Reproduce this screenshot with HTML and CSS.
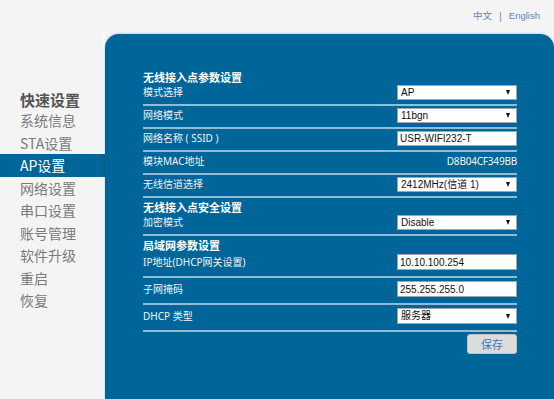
FILE: index.html
```html
<!DOCTYPE html>
<html lang="zh-CN">
<head>
<meta charset="utf-8">
<title>AP设置</title>
<link rel="stylesheet" href="styles.css">
</head>
<body>
<div class="topbar">
  <a class="lang" href="#">中文</a><span class="sep">|</span><a class="lang" href="#">English</a>
</div>
<div class="main">
  <nav class="sidebar">
    <div class="side-title">快速设置</div>
    <div class="side-item">系统信息</div>
    <div class="side-item">STA设置</div>
    <div class="side-item active">AP设置</div>
    <div class="side-item">网络设置</div>
    <div class="side-item">串口设置</div>
    <div class="side-item">账号管理</div>
    <div class="side-item">软件升级</div>
    <div class="side-item">重启</div>
    <div class="side-item">恢复</div>
  </nav>
  <section class="panel">
    <div class="sec-title first">无线接入点参数设置</div>
    <div class="row">
      <span class="label">模式选择</span>
      <div class="select">AP</div>
    </div>
    <div class="row">
      <span class="label">网络模式</span>
      <div class="select">11bgn</div>
    </div>
    <div class="row">
      <span class="label">网络名称 ( SSID )</span>
      <input class="input" type="text" value="USR-WIFI232-T">
    </div>
    <div class="row">
      <span class="label">模块MAC地址</span>
      <span class="value">D8B04CF349BB</span>
    </div>
    <div class="row">
      <span class="label">无线信道选择</span>
      <div class="select">2412MHz(信道 1)</div>
    </div>

    <div class="sec-title">无线接入点安全设置</div>
    <div class="row">
      <span class="label">加密模式</span>
      <div class="select">Disable</div>
    </div>

    <div class="sec-title">局域网参数设置</div>
    <div class="row tall">
      <span class="label">IP地址(DHCP网关设置)</span>
      <input class="input big" type="text" value="10.10.100.254">
    </div>
    <div class="row tall">
      <span class="label">子网掩码</span>
      <input class="input big" type="text" value="255.255.255.0">
    </div>
    <div class="row tall">
      <span class="label">DHCP 类型</span>
      <div class="select big">服务器</div>
    </div>
    <div class="actions">
      <button class="btn" type="button">保存</button>
    </div>
  </section>
</div>
</body>
</html>
```

FILE: styles.css
```css
html, body {
  margin: 0;
  padding: 0;
}
body {
  background: #f4f4f4;
  width: 554px;
  height: 399px;
  overflow: hidden;
  font-family: "Noto Sans", "Noto Sans CJK SC", sans-serif;
}
.topbar {
  height: 34px;
  box-sizing: border-box;
  padding: 10px 14px 0 0;
  display: flex;
  justify-content: flex-end;
  align-items: flex-start;
  font-family: "Liberation Sans", "Noto Sans CJK SC", sans-serif;
  font-size: 9.5px;
  line-height: 12px;
}
.lang {
  color: #5a86bb;
  text-decoration: none;
}
.sep {
  color: #6f8fb8;
  margin: 0 7px;
  font-size: 11px;
}
.main {
  display: flex;
  height: 365px;
}
.sidebar {
  width: 105px;
  flex: none;
  padding-top: 56px;
  box-sizing: border-box;
  font-family: "Noto Sans CJK SC", sans-serif;
  box-shadow: inset -3px 0 0 #fbfbfb;
}
.side-title {
  font-size: 15px;
  font-weight: bold;
  color: #555;
  line-height: 19px;
  padding-left: 20px;
}
.side-item {
  font-size: 14px;
  color: #7a7a7a;
  line-height: 22.5px;
  height: 22.5px;
  padding-left: 20px;
}
.side-item.active {
  background: #006699;
  color: #fff;
}
.panel {
  flex: 1;
  background: #006699;
  border-radius: 14px 14px 0 0;
  box-shadow: 0 0 3px rgba(0, 0, 0, 0.25);
  padding: 0 37px 0 38px;
  box-sizing: border-box;
  color: #eef4f8;
}
.sec-title {
  font-family: "Noto Sans CJK SC", sans-serif;
  font-weight: bold;
  font-size: 11px;
  line-height: 12px;
  color: #fff;
  padding-top: 3px;
}
.sec-title.first {
  padding-top: 37px;
}
.row {
  display: flex;
  align-items: center;
  justify-content: space-between;
  padding: 2px 0 4px;
  border-bottom: 2px solid #8fbcd8;
}
.row.tall {
  padding: 3px 0 6px;
}
.label {
  font-family: "Noto Sans", "Noto Sans CJK SC", sans-serif;
  font-size: 10px;
  line-height: 15px;
  color: #eef4f8;
}
.value {
  font-family: "Noto Sans", sans-serif;
  font-size: 10px;
  line-height: 15px;
  color: #f2f6f9;
  letter-spacing: -0.2px;
}
.select, .input {
  width: 120px;
  height: 15px;
  box-sizing: border-box;
  background: #fff;
  border: 1px solid #9aa7b2;
  font-family: "Liberation Sans", "Noto Sans CJK SC", sans-serif;
  font-size: 10px;
  line-height: 13px;
  color: #111;
  padding: 0 0 0 3px;
  margin: 0;
}
.select {
  position: relative;
}
.select::after {
  content: "";
  position: absolute;
  right: 6px;
  top: 4px;
  border-left: 2.5px solid transparent;
  border-right: 2.5px solid transparent;
  border-top: 5px solid #111;
}
.select.big, .input.big {
  height: 16px;
  line-height: 14px;
}
.select.big::after {
  top: 5px;
}
.input {
  outline: none;
  padding-left: 2px;
}
.actions {
  display: flex;
  justify-content: flex-end;
  padding-top: 2px;
}
.btn {
  width: 50px;
  height: 20px;
  background: #dcdcdc;
  border: 1px solid #c4c4c4;
  border-radius: 3px;
  color: #3d7ab8;
  font-family: "Noto Sans CJK SC", sans-serif;
  font-size: 11px;
  padding: 0;
  line-height: 18px;
}
```
